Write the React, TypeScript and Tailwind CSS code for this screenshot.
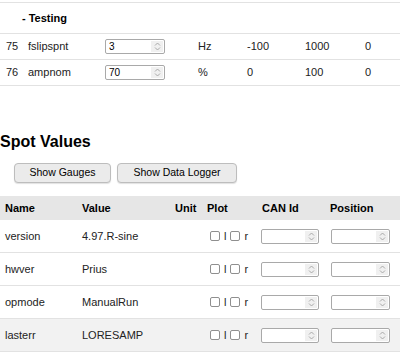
import React from "react";

// Spinner box used for number fields
function NumField({ value, className = "" }: { value?: string; className?: string }) {
  return (
    <div
      className={`flex h-[15px] items-stretch rounded-[2px] border border-[#a9a9a9] bg-white ${className}`}
    >
      <span className="flex-1 pl-[3px] text-[10px] leading-[13px] text-black">{value}</span>
      <span className="m-[1px] flex w-[12px] items-center justify-center bg-[#f0f0f0]">
        <svg width="7" height="9" viewBox="0 0 7 9" fill="none" stroke="#a0a0a0" strokeWidth="0.9">
          <path d="M1 3.5 L3.5 1 L6 3.5" />
          <path d="M1 5.5 L3.5 8 L6 5.5" />
        </svg>
      </span>
    </div>
  );
}

function Checkbox() {
  return <span className="inline-block h-[10px] w-[10px] rounded-[2px] border border-[#8f8f8f] bg-white" />;
}

const params = [
  { id: "75", name: "fslipspnt", value: "3", unit: "Hz", min: "-100", max: "1000", def: "0" },
  { id: "76", name: "ampnom", value: "70", unit: "%", min: "0", max: "100", def: "0" },
];

const spots = [
  { name: "version", value: "4.97.R-sine" },
  { name: "hwver", value: "Prius" },
  { name: "opmode", value: "ManualRun" },
  { name: "lasterr", value: "LORESAMP", hover: true },
];

const paramCols = "grid grid-cols-[22px_83px_87px_49px_58px_60px_1fr]";
const spotCols = "grid grid-cols-[77px_93px_32px_55px_69px_1fr]";

export default function App() {
  return (
    <div className="h-[357px] w-[400px] overflow-hidden bg-white text-[11px] text-[#222] [font-family:'Liberation_Sans',Arial,sans-serif]">
      {/* Parameter table */}
      <div className="mt-[2px] border-t border-[#e2e2e2]">
        <div className={`${paramCols} h-[31px] items-center border-b border-[#e2e2e2]`}>
          <span />
          <span className="col-span-6 font-bold text-black">- Testing</span>
        </div>
        {params.map((p) => (
          <div key={p.id} className={`${paramCols} h-[26px] items-center border-b border-[#e2e2e2]`}>
            <span className="pl-[6px]">{p.id}</span>
            <span className="pl-[6px]">{p.name}</span>
            <NumField value={p.value} className="w-[60px]" />
            <span className="pl-[6px]">{p.unit}</span>
            <span className="pl-[6px]">{p.min}</span>
            <span className="pl-[6px]">{p.max}</span>
            <span className="pl-[6px]">{p.def}</span>
          </div>
        ))}
      </div>

      {/* Spot values */}
      <h2 className="mt-[46px] text-[16px] leading-[20px] font-bold text-black">Spot Values</h2>
      <div className="mt-[11px] flex gap-[6px] pl-[14px]">
        <button className="h-[20px] w-[97px] rounded-[4px] border border-[#bdbdbd] bg-[#ebebeb] text-[10.5px] text-black shadow-[0_1px_1px_rgba(0,0,0,0.12)]">
          Show Gauges
        </button>
        <button className="h-[20px] w-[120px] rounded-[4px] border border-[#bdbdbd] bg-[#ebebeb] text-[10.5px] text-black shadow-[0_1px_1px_rgba(0,0,0,0.12)]">
          Show Data Logger
        </button>
      </div>

      <div className="mt-[13px]">
        <div className={`${spotCols} h-[24px] items-center bg-[#e6e6e6] font-bold text-black`}>
          <span className="pl-[5px]">Name</span>
          <span className="pl-[5px]">Value</span>
          <span className="pl-[5px]">Unit</span>
          <span className="pl-[5px]">Plot</span>
          <span className="pl-[5px]">CAN Id</span>
          <span className="pl-[4px]">Position</span>
        </div>
        {spots.map((s) => (
          <div
            key={s.name}
            className={`${spotCols} h-[33px] items-center border-b border-[#e2e2e2] ${s.hover ? "bg-[#f2f2f2]" : ""}`}
          >
            <span className="pl-[5px]">{s.name}</span>
            <span className="pl-[5px]">{s.value}</span>
            <span />
            <span className="flex items-center pl-[8px]">
              <Checkbox />
              <span className="ml-[4px] mr-[4px]">l</span>
              <Checkbox />
              <span className="ml-[4px]">r</span>
            </span>
            <NumField className="ml-[4px] w-[58px]" />
            <NumField className="ml-[5px] w-[59px]" />
          </div>
        ))}
      </div>
    </div>
  );
}
